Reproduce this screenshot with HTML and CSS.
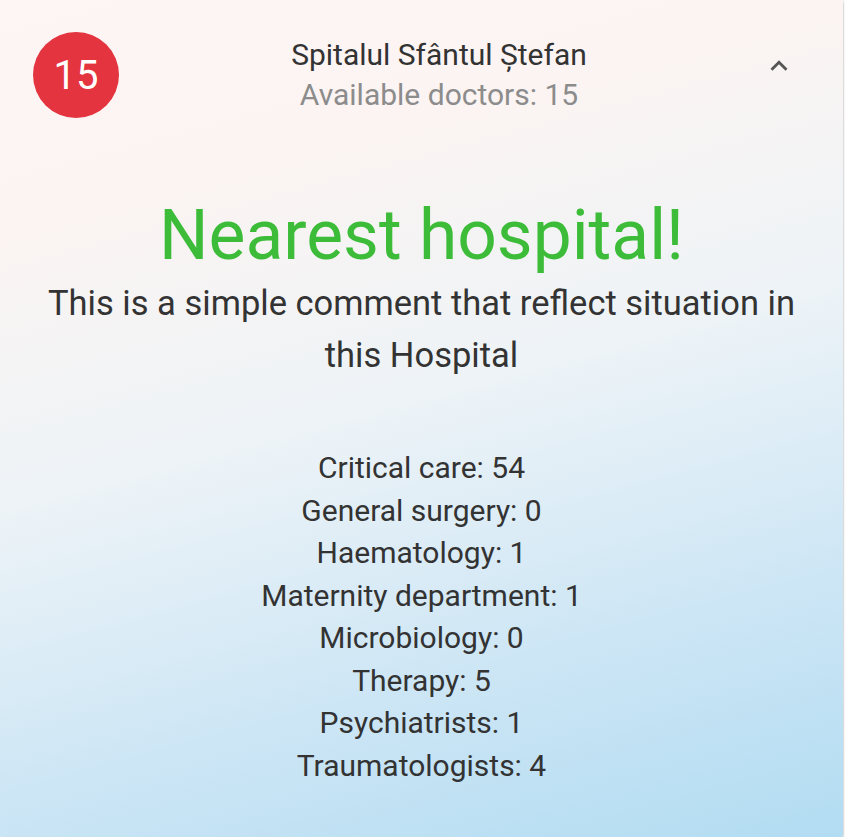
FILE: index.html
```html
<!DOCTYPE html>
<html>
<head>
<meta charset="utf-8">
<link rel="stylesheet" href="styles.css">
</head>
<body>
<div class="card">
  <div class="header">
    <div class="avatar">15</div>
    <div class="titles">
      <div class="title">Spitalul Sfântul Ștefan</div>
      <div class="subtitle">Available doctors: 15</div>
    </div>
    <div class="chevron">
      <svg width="34" height="34" viewBox="0 0 24 24"><path d="M7.41 15.41L12 10.83l4.59 4.58L18 14l-6-6-6 6z" fill="#555"/></svg>
    </div>
  </div>
  <div class="content">
    <h1 class="headline">Nearest hospital!</h1>
    <p class="comment">This is a simple comment that reflect situation in this Hospital</p>
    <ul class="stats">
      <li>Critical care: 54</li>
      <li>General surgery: 0</li>
      <li>Haematology: 1</li>
      <li>Maternity department: 1</li>
      <li>Microbiology: 0</li>
      <li>Therapy: 5</li>
      <li>Psychiatrists: 1</li>
      <li>Traumatologists: 4</li>
    </ul>
  </div>
</div>
</body>
</html>
```
FILE: styles.css
```css
html, body {
  margin: 0;
  padding: 0;
  background: #ffffff;
}
body {
  font-family: Roboto, "Noto Sans", sans-serif;
}
.card {
  width: 843px;
  height: 837px;
  box-sizing: border-box;
  background: linear-gradient(165deg, #fdf6f4 0%, #fbf4f2 22%, #edf3f7 48%, #cde6f5 75%, #b2dcf2 100%);
  box-shadow: 0 2px 2px rgba(0,0,0,0.25), 1px 0 2px rgba(0,0,0,0.1);
  border-radius: 2px;
  display: flex;
  flex-direction: column;
}
.header {
  display: flex;
  align-items: center;
  padding: 32px 44px 0 33px;
}
.avatar {
  width: 86px;
  height: 86px;
  border-radius: 50%;
  background: #e3343f;
  color: #fff;
  font-size: 40px;
  display: flex;
  align-items: center;
  justify-content: center;
  flex: none;
}
.titles {
  flex: 1;
  text-align: center;
}
.title {
  font-size: 30px;
  color: #333;
  line-height: 40px;
}
.subtitle {
  font-size: 30px;
  color: #8c8c8c;
  line-height: 40px;
}
.chevron {
  width: 40px;
  display: flex;
  justify-content: center;
  flex: none;
  margin-top: -18px;
}
.content {
  text-align: center;
  padding: 0 40px;
}
.headline {
  margin: 80px 0 0;
  font-size: 69.5px;
  font-weight: 400;
  color: #3cbc38;
  line-height: 76px;
}
.comment {
  margin: 3px 0 0;
  font-size: 34.5px;
  line-height: 52px;
  color: #333;
}
.stats {
  list-style: none;
  margin: 66px 0 0;
  padding: 0;
  font-size: 30px;
  line-height: 42.5px;
  color: #333;
}
```
